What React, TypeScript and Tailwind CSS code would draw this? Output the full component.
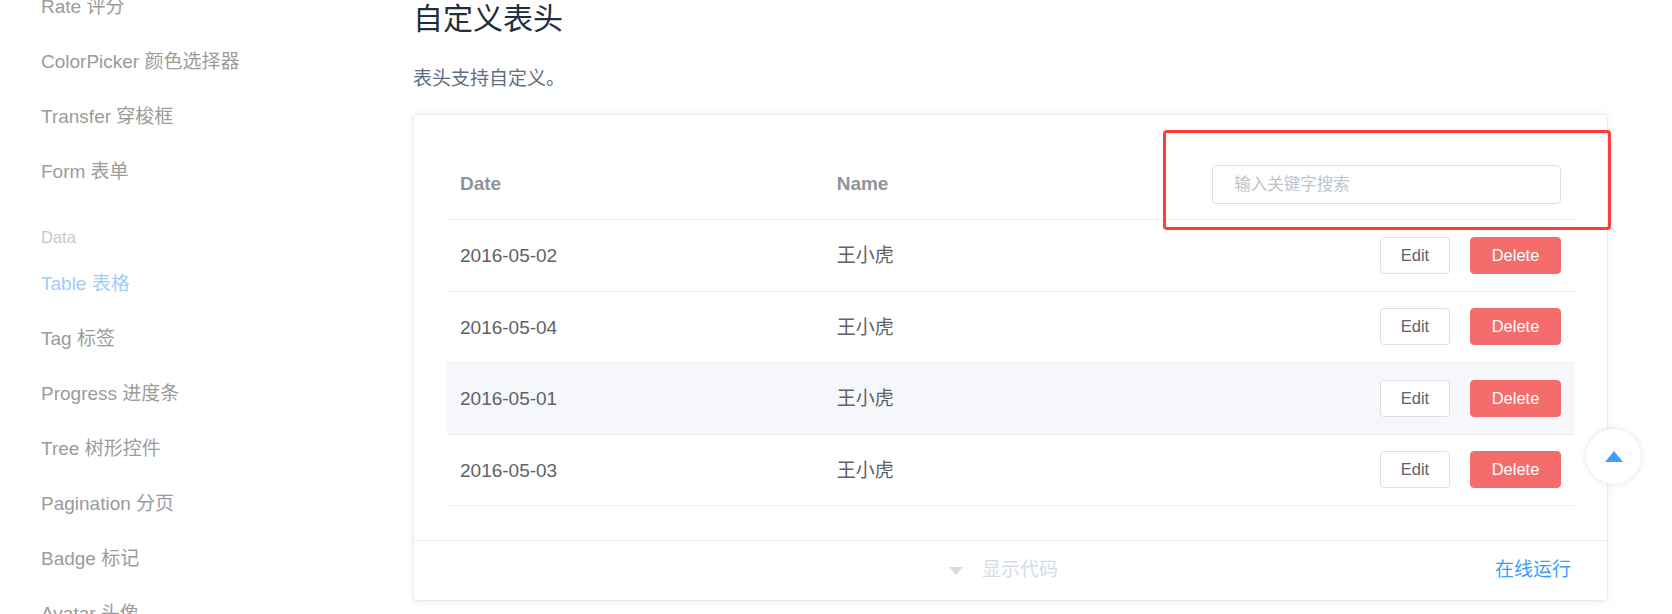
import { Fragment } from 'react';

const font = { fontFamily: '"Liberation Sans", "Noto Sans CJK SC", sans-serif' };

type NavItem = { label: string; group?: boolean; active?: boolean };

const navItems: NavItem[] = [
  { label: 'Rate 评分' },
  { label: 'ColorPicker 颜色选择器' },
  { label: 'Transfer 穿梭框' },
  { label: 'Form 表单' },
  { label: 'Data', group: true },
  { label: 'Table 表格', active: true },
  { label: 'Tag 标签' },
  { label: 'Progress 进度条' },
  { label: 'Tree 树形控件' },
  { label: 'Pagination 分页' },
  { label: 'Badge 标记' },
  { label: 'Avatar 头像' },
];

const rows = [
  { date: '2016-05-02', name: '王小虎' },
  { date: '2016-05-04', name: '王小虎' },
  { date: '2016-05-01', name: '王小虎', hover: true },
  { date: '2016-05-03', name: '王小虎' },
];

const Sidebar = () => (
  <aside className="w-[413px] shrink-0 pl-[41px]">
    <ul className="-mt-[20px]">
      {navItems.map((item) =>
        item.group ? (
          <li key={item.label} className="h-[57px] pt-[26px] text-[16.5px] leading-[23px] text-[#c8c8c8]">
            {item.label}
          </li>
        ) : (
          <li
            key={item.label}
            className={`flex h-[55px] items-center text-[19px] ${item.active ? 'text-[#9fcdfb]' : 'text-[#9b9b9b]'}`}
          >
            {item.label}
          </li>
        )
      )}
    </ul>
  </aside>
);

const DataTable = () => (
  <div className="grid grid-cols-3 text-[19px]">
    {/* header */}
    <div className="flex h-[71px] items-center border-b border-[#ebeef5] pl-[13px] font-bold text-[#909399]">Date</div>
    <div className="flex h-[71px] items-center border-b border-[#ebeef5] pl-[14px] font-bold text-[#909399]">Name</div>
    <div className="flex h-[71px] items-center border-b border-[#ebeef5] px-[14px] pr-[13px]">
      <input
        placeholder="输入关键字搜索"
        className="h-[39px] w-full rounded-[4px] border border-[#dcdfe6] bg-white px-[21px] text-[16.5px] text-[#606266] outline-none placeholder:text-[#c0c4cc]"
      />
    </div>

    {rows.map((row) => (
      <Fragment key={row.date}>
        <div className={`flex h-[71.5px] items-center border-b border-[#ebeef5] pl-[13px] pt-[2px] text-[#606266] ${row.hover ? 'bg-[#f5f7fa]' : ''}`}>
          {row.date}
        </div>
        <div className={`flex h-[71.5px] items-center border-b border-[#ebeef5] pl-[14px] pt-[2px] text-[#606266] ${row.hover ? 'bg-[#f5f7fa]' : ''}`}>
          {row.name}
        </div>
        <div className={`flex h-[71.5px] items-center justify-end gap-[20px] border-b border-[#ebeef5] pr-[13px] ${row.hover ? 'bg-[#f5f7fa]' : ''}`}>
          <button className="h-[37px] w-[70px] rounded-[4px] border border-[#dcdfe6] bg-white text-[16.5px] text-[#606266]">
            Edit
          </button>
          <button className="h-[37px] w-[91px] rounded-[4px] border border-[#f56c6c] bg-[#f56c6c] text-[16.5px] text-white">
            Delete
          </button>
        </div>
      </Fragment>
    ))}
  </div>
);

export default function App() {
  return (
    <div className="relative flex h-[614px] w-[1672px] overflow-hidden bg-white" style={font}>
      <Sidebar />

      <main className="w-[1195px] shrink-0">
        <h3 className="text-[30px] leading-[38px] text-[#1f2f3d]">自定义表头</h3>
        <p className="mt-[28px] text-[19px] leading-[26px] text-[#5e6d82]">表头支持自定义。</p>

        {/* demo block */}
        <div className="relative mt-[22px] rounded-[4px] border border-[#ebebeb] bg-white shadow-[0_0_8px_0_rgba(232,237,250,0.6),0_2px_4px_0_rgba(232,237,250,0.5)]">
          <div className="px-[33px] pb-[34px] pt-[34px]">
            <DataTable />
          </div>

          <div className="grid h-[60px] grid-cols-[1fr_auto_1fr] items-center border-t border-[#eaeefb]">
            <div />
            <div className="flex items-center gap-[19px] pr-[14px] text-[19px] text-[#d3dce6]">
              <svg width="14" height="8" viewBox="0 0 14 8">
                <path d="M0 0 L14 0 L7 8 Z" fill="#d3dce6" />
              </svg>
              <span>显示代码</span>
            </div>
            <div className="flex justify-end pr-[36px] text-[19px] text-[#409eff]">在线运行</div>
          </div>

          {/* annotation box */}
          <div className="pointer-events-none absolute left-[749px] top-[15px] h-[100px] w-[448px] rounded-[4px] border-[3px] border-[#ff3d3d]" />
        </div>
      </main>

      {/* back to top */}
      <div className="absolute left-[1586px] top-[429px] flex h-[55px] w-[55px] items-center justify-center rounded-full bg-white shadow-[0_0_6px_rgba(0,0,0,0.12)]">
        <svg width="18" height="11" viewBox="0 0 18 11">
          <path d="M9 0 L18 11 L0 11 Z" fill="#409eff" />
        </svg>
      </div>
    </div>
  );
}
